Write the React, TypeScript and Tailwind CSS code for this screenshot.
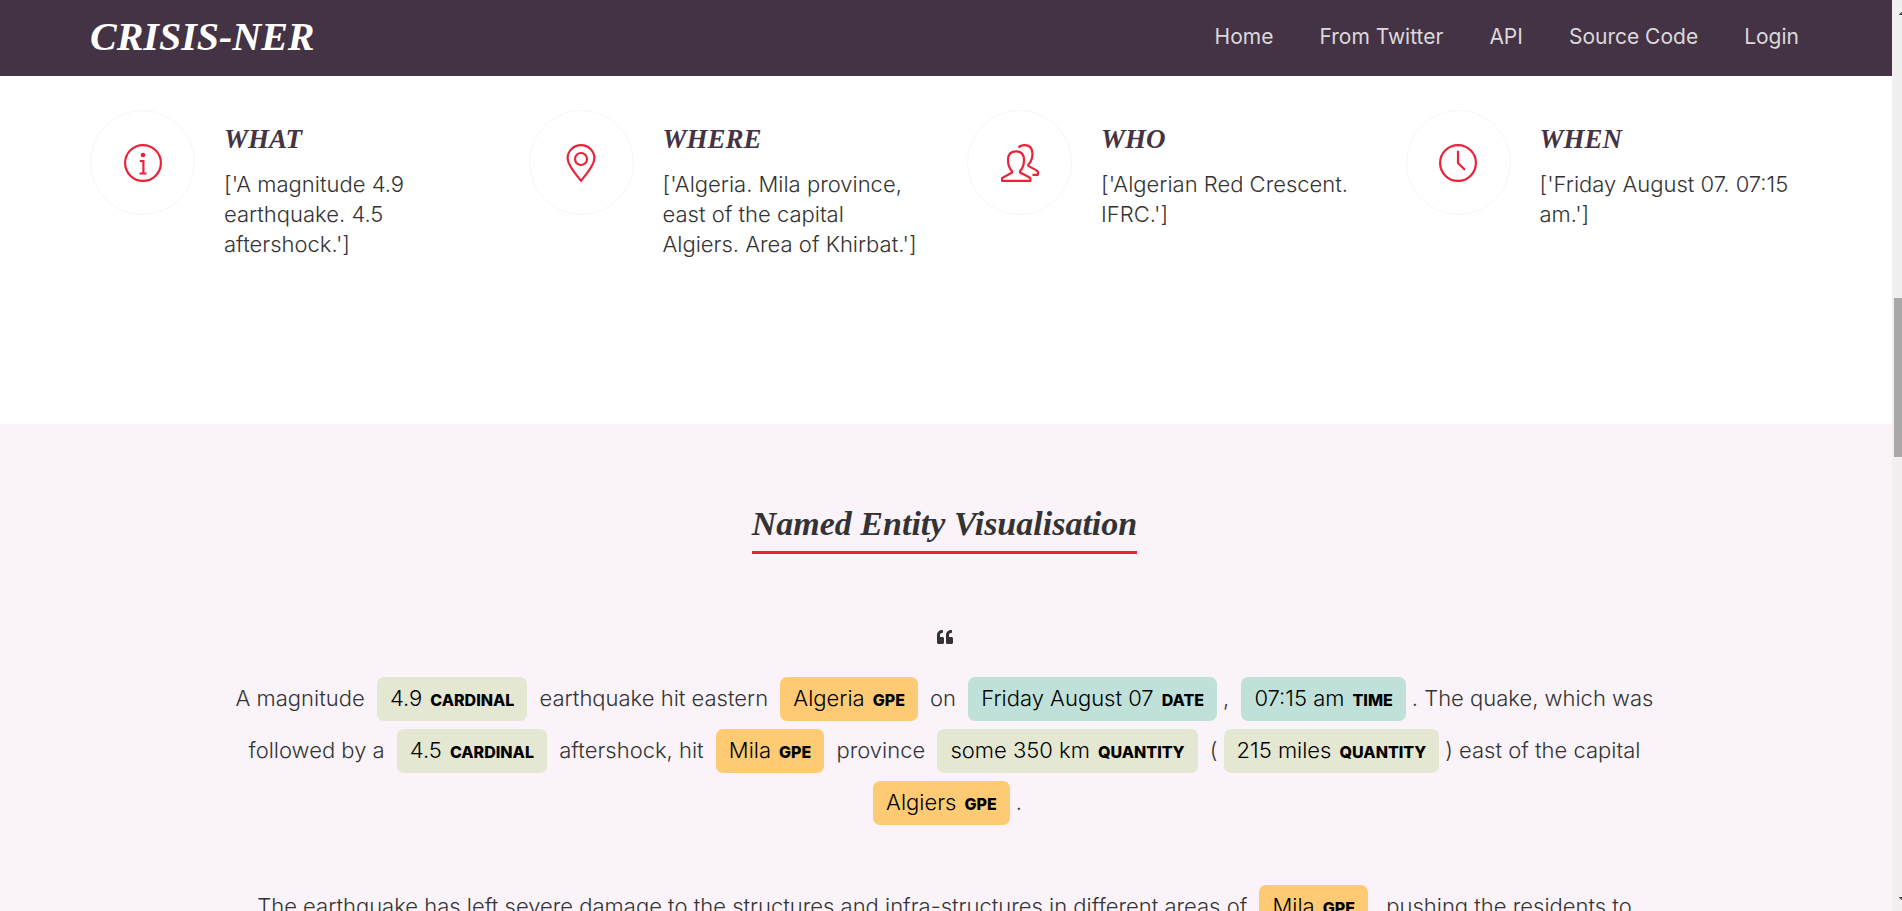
import React from "react";
import { FaQuoteLeft } from "react-icons/fa";

const NAV = ["Home", "From Twitter", "API", "Source Code", "Login"];

function InfoIcon() {
  return (
    <svg viewBox="0 0 38 38" className="size-[38px]" fill="none" stroke="currentColor" strokeWidth="2.2" aria-hidden="true">
      <circle cx="19" cy="19" r="17.9" />
      <circle cx="19" cy="11" r="2.3" fill="currentColor" stroke="none" />
      <path d="M15.800 17h3.600v12M15.500 29.500h7" />
    </svg>
  );
}

function PinIcon() {
  return (
    <svg viewBox="0 0 38 38" className="size-[38px]" fill="none" stroke="currentColor" strokeWidth="2.2" strokeLinejoin="round" aria-hidden="true">
      <path d="M19 36.800C14 30.500 5.600 21.500 5.600 14.300a13.400 13.200 0 0 1 26.800 0C32.400 21.500 24 30.500 19 36.800z" />
      <circle cx="19" cy="15" r="6" />
    </svg>
  );
}

function PeopleIcon() {
  return (
    <svg viewBox="0 0 38 38" className="size-[38px]" fill="none" stroke="currentColor" strokeWidth="2.2" strokeLinejoin="round" aria-hidden="true">
      <path d="M15 7.300c5.500 0 8 3.600 8 8.700 0 5.500-1.400 8.500-4 11.200v1.300c3.500 2 7.500 3.500 10.300 5.700V36.900H1.100v-2.700c2.500-2.200 7-3.700 9.900-5.700v-1.300C8.400 24.500 7 21.500 7 16c0-5.100 2.500-8.700 8-8.700z" />
      <path d="M17.500 3.500C19 1.800 21 1.100 23.500 1.100c5.500 0 8 3.500 8 8.600 0 5.500-1.700 8.300-4.200 11v1.200c3.400 2 7.200 3.500 9.600 5.600v3.300h-5.400" />
    </svg>
  );
}

function ClockIcon() {
  return (
    <svg viewBox="0 0 38 38" className="size-[38px]" fill="none" stroke="currentColor" strokeWidth="2.2" strokeLinecap="round" aria-hidden="true">
      <circle cx="19" cy="19" r="17.9" />
      <path d="M19 7.500V19l6.300 6.300" />
    </svg>
  );
}

const FACTS = [
  { title: "WHAT", icon: <InfoIcon />, text: "['A magnitude 4.9 earthquake. 4.5 aftershock.']" },
  { title: "WHERE", icon: <PinIcon />, text: "['Algeria. Mila province, east of the capital Algiers. Area of Khirbat.']" },
  { title: "WHO", icon: <PeopleIcon />, text: "['Algerian Red Crescent. IFRC.']" },
  { title: "WHEN", icon: <ClockIcon />, text: "['Friday August 07. 07:15 am.']" },
];

const TONES: Record<string, string> = {
  CARDINAL: "bg-[#e4e7d2]",
  QUANTITY: "bg-[#e4e7d2]",
  GPE: "bg-[#feca74]",
  DATE: "bg-[#bfe1d9]",
  TIME: "bg-[#bfe1d9]",
};

function Entity({ label, children }: { label: string; children: React.ReactNode }) {
  return (
    <mark className={`mx-[6px] inline-block rounded-[7px] px-[13px] py-[10px] leading-[23px] whitespace-nowrap text-black ${TONES[label]}`}>
      {children}
      <span className="ml-2 align-middle text-[16px] leading-[22px] font-extrabold">{label}</span>
    </mark>
  );
}

export default function App() {
  return (
    <div className="flex h-screen overflow-hidden bg-white font-[Inter,sans-serif] text-[22px] font-light text-[#333]">
      <div className="min-w-0 flex-1 overflow-hidden">
        <header className="flex h-[76px] items-center justify-between bg-[#443344] pr-[93px] pb-[2px] pl-[90px]">
          <a href="#home" className="font-['Liberation_Serif',serif] text-[40px] leading-none font-bold text-white italic">
            CRISIS-NER
          </a>
          <nav className="flex gap-[46px] text-[21px] font-normal text-[#dcd8dc]">
            {NAV.map((item) => (
              <a key={item} href="#top">{item}</a>
            ))}
          </nav>
        </header>

        <section className="grid grid-cols-4 gap-[45px] pt-[34px] pr-[93px] pb-[165px] pl-[90px]">
          {FACTS.map((fact) => (
            <article key={fact.title} className="flex gap-[29px]">
              <div className="flex size-[105px] shrink-0 items-center justify-center rounded-full border border-[#f6f6f6] text-[#ed213a]">
                {fact.icon}
              </div>
              <div className="min-w-0 pt-[12px]">
                <h3 className="mb-[13px] font-['Liberation_Serif',serif] text-[27px] leading-[34px] font-bold text-[#443344] italic">
                  {fact.title}
                </h3>
                <p className="leading-[30px]">{fact.text}</p>
              </div>
            </article>
          ))}
        </section>

        <section className="bg-[#faf3fa] pt-[77px] pr-[223px] pb-20 pl-[220px] text-center">
          <h2 className="inline-block border-b-[3px] border-[#ed213a] pb-[5px] font-['Liberation_Serif',serif] text-[34px] leading-[45px] font-bold italic">
            Named Entity Visualisation
          </h2>
          <FaQuoteLeft className="mx-auto mt-[75px] mb-[27px] size-4" aria-hidden="true" />
          <p className="leading-[52px]">
            A magnitude <Entity label="CARDINAL">4.9</Entity> earthquake hit eastern <Entity label="GPE">Algeria</Entity> on{" "}
            <Entity label="DATE">Friday August 07</Entity>, <Entity label="TIME">07:15 am</Entity>. The quake, which was
            followed by a <Entity label="CARDINAL">4.5</Entity> aftershock, hit <Entity label="GPE">Mila</Entity> province{" "}
            <Entity label="QUANTITY">some 350 km</Entity> (<Entity label="QUANTITY">215 miles</Entity>) east of the capital{" "}
            <Entity label="GPE">Algiers</Entity>.
          </p>
          <p className="mt-[52px] leading-[52px]">
            The earthquake has left severe damage to the structures and infra-structures in different areas of{" "}
            <Entity label="GPE">Mila</Entity>&nbsp; pushing the residents to
          </p>
        </section>
      </div>

      <div className="flex w-[10px] shrink-0 flex-col items-end overflow-hidden bg-[#f0f0f0]" aria-hidden="true">
        <svg viewBox="0 0 3 15" className="h-[15px] w-[3px] shrink-0" fill="#505050">
          <path d="M0 15v-1h1v-1h1v-1h1v3z" />
        </svg>
        <div className="mt-[283px] h-[159px] w-2 shrink-0 bg-[#a8a8a8]" />
        <svg viewBox="0 0 3 14" className="mt-auto h-[14px] w-[3px] shrink-0" fill="#505050">
          <path d="M0 0v1h1v1h1v1h1V0z" />
        </svg>
      </div>
    </div>
  );
}
